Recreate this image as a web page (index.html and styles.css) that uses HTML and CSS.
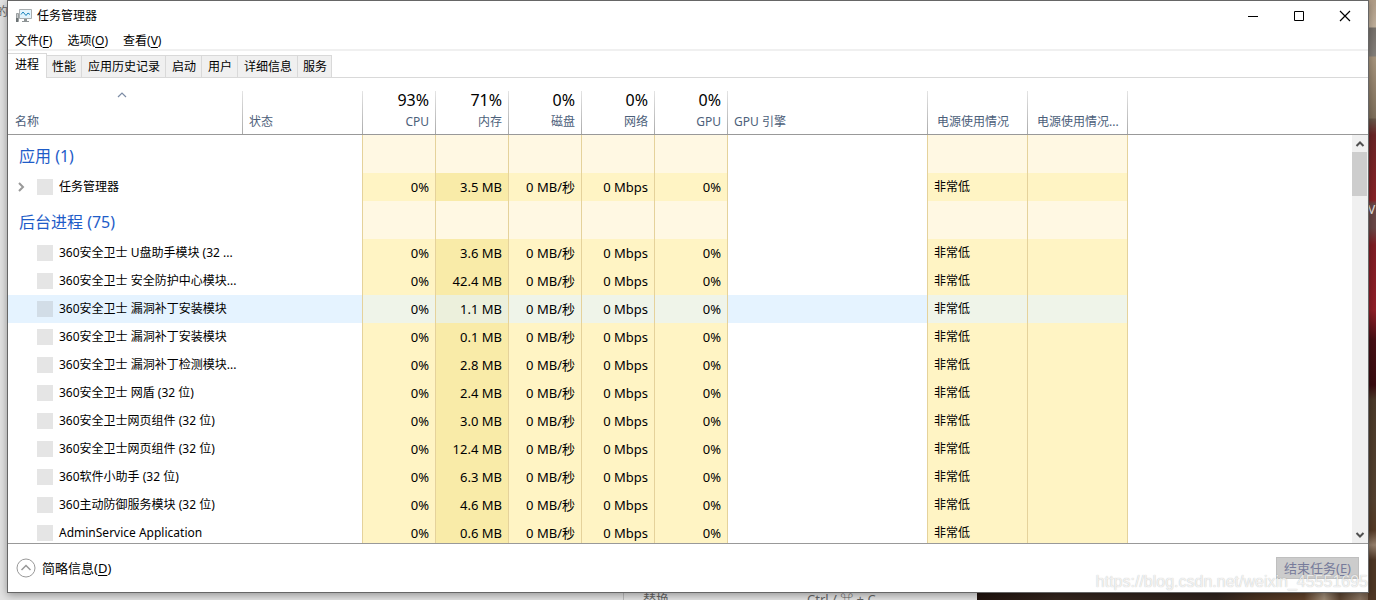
FILE: index.html
```html
<!DOCTYPE html>
<html lang="zh-CN">
<head>
<meta charset="utf-8">
<title>任务管理器</title>
<link rel="stylesheet" href="styles.css">
</head>
<body class="desktop">
<div class="page-divider"></div>
<div class="wallpaper-bottom"></div>
<div class="wallpaper-right"></div>
<span class="behind behind-left">的</span>
<span class="behind behind-replace">替换</span>
<span class="behind behind-keys">Ctrl / ⌘ + C</span>
<span class="behind behind-v">V</span>
<main class="window">
  <header class="titlebar">
    <svg class="app-icon" width="16" height="16" viewBox="0 0 16 16" aria-hidden="true">
      <path d="M0.500 5.500h2v8h-2z" fill="#c9cccd" stroke="#9a9fa1"/>
      <path d="M0 10h2v4H0z" fill="#6d7476"/>
      <path d="M3.500 1.500h12v9h-12z" fill="#e3f4fd" stroke="#a9aeb0"/>
      <path d="M5 6.500L7 4l3 3.500L12 5l2 1.500" fill="none" stroke="#1b84bd"/>
      <path d="M8 11h3v2h2v1H6v-1h2z" fill="#8d9395"/>
    </svg>
    <h1 class="title">任务管理器</h1>
    <div class="window-buttons">
      <button class="window-button" aria-label="最小化"><svg width="12" height="12" viewBox="0 0 12 12"><path d="M1 6.500h10" stroke="#000"/></svg></button>
      <button class="window-button" aria-label="最大化"><svg width="12" height="12" viewBox="0 0 12 12"><path d="M1.500 1.500h9v9h-9z" fill="none" stroke="#000"/></svg></button>
      <button class="window-button" aria-label="关闭"><svg width="12" height="12" viewBox="0 0 12 12"><path d="M1 1l10 10M11 1L1 11" stroke="#000" stroke-width="1.200"/></svg></button>
    </div>
  </header>
  <nav class="menu">
    <button class="menu-item">文件(<u>F</u>)</button>
    <button class="menu-item">选项(<u>O</u>)</button>
    <button class="menu-item">查看(<u>V</u>)</button>
  </nav>
  <div class="tabs" role="tablist">
    <button class="tab active" role="tab" aria-selected="true">进程</button>
    <button class="tab" role="tab">性能</button>
    <button class="tab" role="tab">应用历史记录</button>
    <button class="tab" role="tab">启动</button>
    <button class="tab" role="tab">用户</button>
    <button class="tab" role="tab">详细信息</button>
    <button class="tab" role="tab">服务</button>
  </div>
  <section class="list">
    <table class="processes">
      <colgroup>
        <col class="w-name"><col class="w-status"><col class="w-num"><col class="w-num"><col class="w-num"><col class="w-num"><col class="w-num"><col class="w-engine"><col class="w-power"><col class="w-power"><col>
      </colgroup>
      <thead>
        <tr>
          <th><svg class="sort" width="10" height="6" viewBox="0 0 10 6" aria-hidden="true"><path d="M1 5l4-4 4 4" fill="none" stroke="#7c8ca5" stroke-width="1.200"/></svg>名称</th>
          <th>状态</th>
          <th class="num"><b>93%</b>CPU</th>
          <th class="num"><b>71%</b>内存</th>
          <th class="num"><b>0%</b>磁盘</th>
          <th class="num"><b>0%</b>网络</th>
          <th class="num"><b>0%</b>GPU</th>
          <th>GPU 引擎</th>
          <th class="power">电源使用情况</th>
          <th class="power">电源使用情况...</th>
          <th class="rest"></th>
        </tr>
      </thead>
      <tbody id="rows"></tbody>
    </table>
    <div class="scrollbar">
      <button class="scroll-button" aria-label="向上滚动"><svg width="10" height="8" viewBox="0 0 10 8"><path d="M1.500 6L5 2.500 8.500 6" fill="none" stroke="#505050" stroke-width="2"/></svg></button>
      <div class="thumb"></div>
      <button class="scroll-button" aria-label="向下滚动"><svg width="10" height="8" viewBox="0 0 10 8"><path d="M1.500 2L5 5.500 8.500 2" fill="none" stroke="#505050" stroke-width="2"/></svg></button>
    </div>
  </section>
  <footer class="footer">
    <button class="less"><svg width="20" height="20" viewBox="0 0 20 20" aria-hidden="true"><circle cx="10" cy="10" r="9" fill="none" stroke="#999"/><path d="M5.500 12L10 7.500l4.500 4.500" fill="none" stroke="#999" stroke-width="1.500"/></svg><span>简略信息(<u>D</u>)</span></button>
    <button class="end" disabled>结束任务(<u>E</u>)</button>
  </footer>
</main>
<span class="watermark">https://blog.csdn.net/weixin_45551695</span>
<script src="rows.js"></script>
</body>
</html>
```
FILE: rows.js
```js
const processes = [
  { group: "应用 (1)" },
  { name: "任务管理器", memory: "3.5", expandable: true },
  { group: "后台进程 (75)" },
  { name: "360安全卫士 U盘助手模块 (32 ...", memory: "3.6" },
  { name: "360安全卫士 安全防护中心模块...", memory: "42.4" },
  { name: "360安全卫士 漏洞补丁安装模块", memory: "1.1", hover: true },
  { name: "360安全卫士 漏洞补丁安装模块", memory: "0.1" },
  { name: "360安全卫士 漏洞补丁检测模块...", memory: "2.8" },
  { name: "360安全卫士 网盾 (32 位)", memory: "2.4" },
  { name: "360安全卫士网页组件 (32 位)", memory: "3.0" },
  { name: "360安全卫士网页组件 (32 位)", memory: "12.4" },
  { name: "360软件小助手 (32 位)", memory: "6.3" },
  { name: "360主动防御服务模块 (32 位)", memory: "4.6" },
  { name: "AdminService Application", memory: "0.6" }
];
const chevron = '<svg width="8" height="10" viewBox="0 0 8 10"><path d="M2 1l4 4-4 4" fill="none" stroke="#999" stroke-width="2"/></svg>';
const heat = text => `<td class="heat">${text}</td>`;
document.getElementById("rows").innerHTML = processes.map(p => {
  const values = p.group
    ? ["", "", "", "", ""]
    : ["0%", p.memory + " MB", "0 MB/秒", "0 Mbps", "0%"];
  const first = p.group
    ? p.group
    : `<div class="name"><span class="expander">${p.expandable ? chevron : ""}</span><span class="icon"></span><span>${p.name}</span></div>`;
  const kind = p.group ? "group" : p.hover ? "process hover" : "process";
  return `<tr class="${kind}"><td>${first}</td><td class="edge"></td>${values.map(heat).join("")}<td class="edge"></td><td class="heat left">${p.group ? "" : "非常低"}</td>${heat("")}<td class="blank"></td></tr>`;
}).join("");
```
FILE: styles.css
```css
* { box-sizing: border-box; }
.desktop {
  margin: 0;
  height: 100vh;
  padding: 0 7px 7px;
  display: flex;
  overflow: hidden;
  position: relative;
  background: #e2e2e2;
  font: 12px/16px "Noto Sans", "Noto Sans CJK SC", sans-serif;
  color: #000;
}
button { font: inherit; color: inherit; border: 0; background: none; padding: 0; }
u { text-underline-offset: 2px; }
.page-divider { position: absolute; left: 623px; bottom: 0; width: 1px; height: 8px; background: #bbb; }
.wallpaper-bottom {
  position: absolute; left: 71%; right: 0; bottom: 0; height: 8px;
  background: linear-gradient(90deg, #21140f, #35261e 20%, #30241e 60%, #4b3322 70%, #60412a 82%, #a08d78 87%, #5b4330 91%, #8b7663 96%, #5b4330);
}
.wallpaper-right {
  position: absolute; right: 0; top: 0; bottom: 0; width: 8px;
  background: linear-gradient(#b09c86 0, #c1b19c 27px, #77716b 28px, #85807b 56px, #a9967e 57px, #80705c 118px, #69584a 119px, #6c2526 135px, #8a2227 200px, #6b4847 204px, #6b4847 228px, #811d24 245px, #921f28 310px, #481015 340px, #3a0c10 385px, #4c3a2a 400px, #554230 500px, #553a25 530px, #97816d 545px, #4f3725 560px);
}
.behind { position: absolute; color: #666; }
.behind-left { left: -4px; top: 4px; }
.behind-replace { left: 643px; top: 591px; font-size: 13px; }
.behind-keys { left: 807px; top: 591px; font-size: 13px; }
.behind-v { left: 1368px; top: 202px; color: #eee; }
.window {
  position: relative; flex: 1; min-width: 0;
  display: flex; flex-direction: column;
  background: #fff; border: 1px solid #666;
  box-shadow: 0 2px 8px rgba(0, 0, 0, .35);
}
.titlebar { display: flex; align-items: center; height: 29px; padding-left: 8px; gap: 5px; flex: none; }
.title { margin: 0; font-size: 12px; font-weight: 400; }
.window-buttons { display: flex; margin-left: auto; }
.window-button { width: 46px; height: 28px; display: grid; place-items: center; }
.menu { display: flex; gap: 15px; padding: 0 7px; height: 21px; border-bottom: 2px solid #f0f0f0; flex: none; }
.menu-item { height: 20px; line-height: 21px; }
.tabs { display: flex; align-items: flex-end; height: 27px; border-bottom: 1px solid #d9d9d9; flex: none; }
.tab { height: 22px; padding: 0 5px 0 6px; background: #f0f0f0; border: 1px solid #d9d9d9; border-width: 1px 1px 0 0; }
.tab:nth-child(2) { padding-left: 5px; }
.tab:last-child { padding: 0 4px 0 5px; }
.tab.active { height: 25px; margin-bottom: -1px; padding: 0 7px 3px; background: #fff; }
.list { flex: 1; min-height: 0; overflow: hidden; position: relative; border-bottom: 1px solid #999; }
.processes { width: 100%; table-layout: fixed; border-collapse: separate; border-spacing: 0; }
.w-name { width: 235px; }
.w-status { width: 120px; }
.w-num { width: 73px; }
.w-engine { width: 200px; }
.w-power { width: 100px; }
th {
  height: 57px; padding: 0 7px 4px; position: relative;
  vertical-align: bottom; text-align: left; font-weight: 400; color: #4c607a; white-space: nowrap;
  border-bottom: 1px solid #999;
  background: linear-gradient(#e4e4e4, #aaa) right bottom / 1px 43px no-repeat;
}
th.rest { background: none; }
th.num { text-align: right; }
th.num b { display: block; font-size: 16px; line-height: 20px; padding-bottom: 4px; margin-top: -4px; font-weight: 400; color: #000; }
th.power { padding-left: 9px; }
th:nth-child(2), th:nth-child(8) { padding-left: 6px; }
.sort { position: absolute; left: 109px; top: 14px; }
td { padding: 0; white-space: nowrap; }
.group td { height: 38px; font-size: 16px; line-height: 24px; color: #1e5cc8; padding-left: 11px; padding-top: 4px; }
.process td { height: 28px; }
.edge { border-right: 1px solid #e5d29b; }
.heat { text-align: right; padding-right: 6px; border-right: 1px solid #e5d29b; background: #fff4c4; }
.process .heat { font-size: 13px; }
.process .heat.left { text-align: left; padding-left: 6px; font-size: 12px; }
.process td:nth-child(4) { background: #f9eba8; }
.group .heat { background: #fff8e3; }
.process.hover td { background: #e5f3ff; }
.process.hover .heat { background: #eff4e9; }
.process.hover td:nth-child(4) { background: #ecf0dc; }
.process.hover .blank { background: none; }
.name { display: flex; align-items: center; }
.expander { width: 29px; padding-left: 9px; display: flex; }
.icon { width: 16px; height: 16px; margin-right: 6px; background: #e5e5e5; }
.hover .icon { background: #d2dde7; }
.scrollbar { position: absolute; top: 57px; right: 0; bottom: 0; width: 16px; display: flex; flex-direction: column; background: #f0f0f0; }
.scroll-button { height: 17px; padding-right: 1px; display: grid; place-items: center; }
.thumb { height: 44px; width: 15px; margin-bottom: auto; background: #cdcdcd; }
.footer { height: 48px; flex: none; padding: 0 9px 0 8px; display: flex; align-items: center; justify-content: space-between; font-size: 13px; }
.less { display: flex; align-items: center; gap: 6px; }
.end { width: 83px; height: 22px; background: #ccc; border: 1px solid #bfbfbf; color: #777b9b; }
.watermark {
  position: absolute; right: 8px; bottom: 9px;
  font: 16px/18px "Liberation Sans", sans-serif; color: rgba(255, 255, 255, .8);
  text-shadow: 0 0 1px rgba(0, 0, 0, .3);
}
```
